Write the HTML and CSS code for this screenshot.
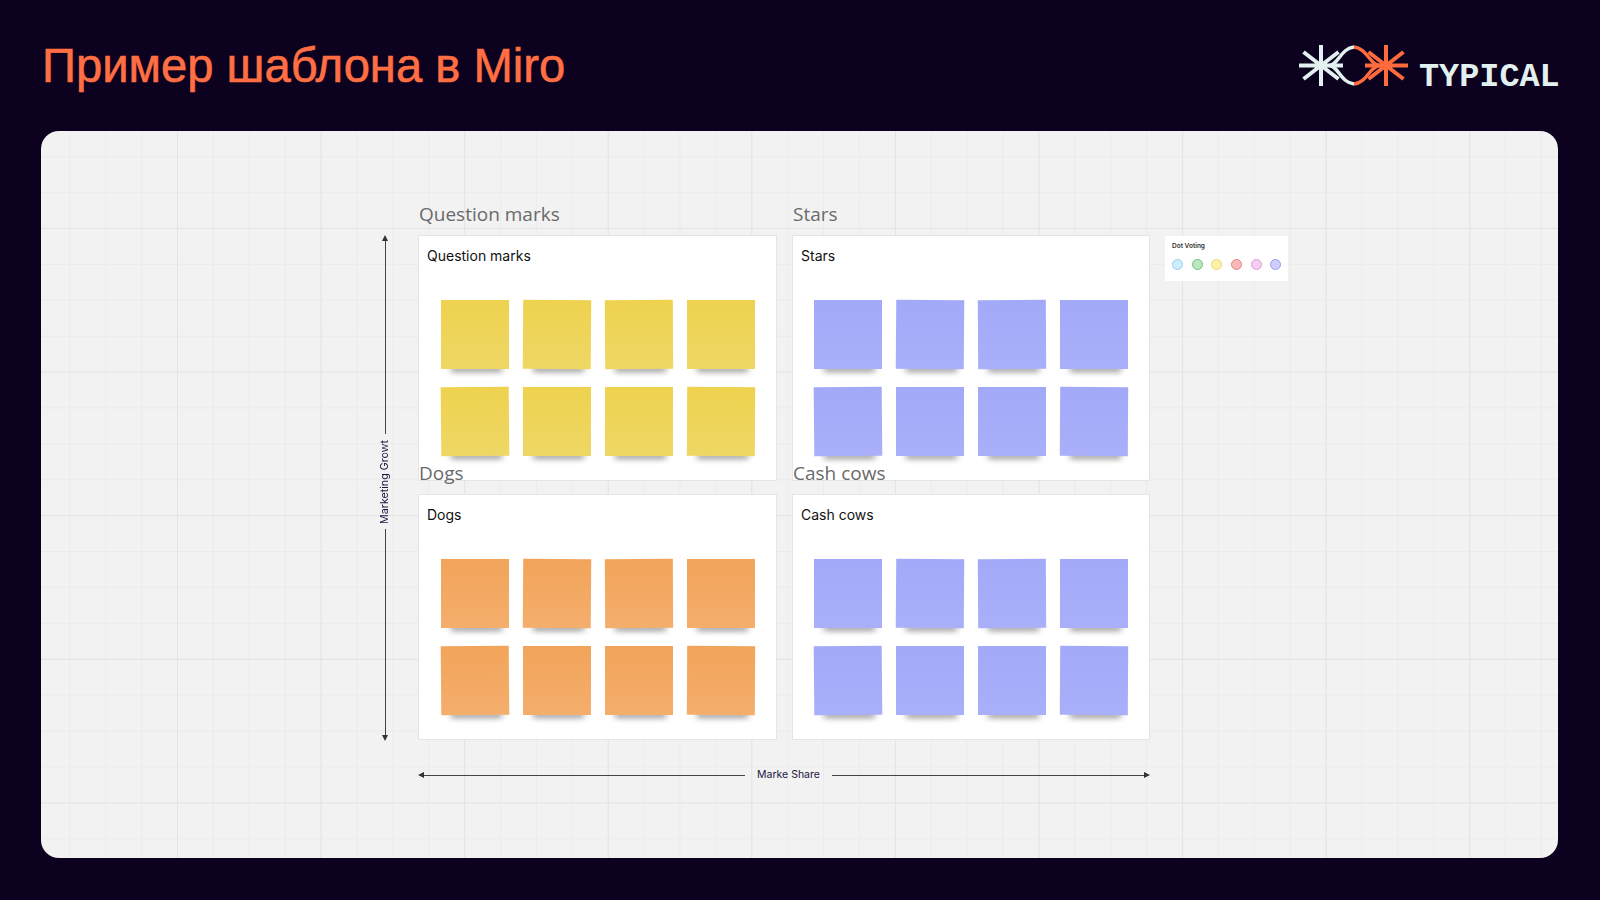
FILE: index.html
```html
<!DOCTYPE html>
<html lang="ru">
<head>
    <meta charset="UTF-8">
    <meta name="viewport" content="width=device-width, initial-scale=1.0">
    <title>Пример шаблона в Miro</title>
    <link rel="stylesheet" href="styles.css">
</head>
<body>

<header class="header">
    <h1 class="title">Пример шаблона в Miro</h1>
    <div class="logo">
        <svg class="logo-mark" width="110" height="44" viewBox="0 0 110 44" fill="none" stroke-width="3.4">
            <g stroke="#e2f1ef">
                <path d="M0 21.5H44M22 1V42M4.5 8L39.5 35M4.5 35L39.5 8" stroke-width="4"/>
                <path d="M30 21.5C39 21.5 42 4 55 3M30 21.5C39 21.5 42 39 55 40"/>
            </g>
            <g stroke="#ff6b3d">
                <path d="M66 21.5H109M87 1V42M69.5 8L104.5 35M69.5 35L104.5 8" stroke-width="4"/>
                <path d="M55 3C68 4 71 21.5 81 21.5M55 40C68 39 71 21.5 81 21.5"/>
            </g>
        </svg>
        <span class="logo-text">TYPICAL</span>
    </div>
</header>

<main class="board">
    <!-- Вертикальная ось -->
    <div class="axis-v">
        <span class="head head-up"></span>
        <span class="line-v line-top"></span>
        <span class="axis-label-v">Marketing Growt</span>
        <span class="line-v line-bottom"></span>
        <span class="head head-down"></span>
    </div>

    <div class="matrix">
        <section class="quad">
            <div class="quad-label">Question marks</div>
            <div class="card">
                <div class="card-title">Question marks</div>
                <div class="notes">
                    <div class="note yellow"></div><div class="note yellow"></div><div class="note yellow"></div><div class="note yellow"></div>
                    <div class="note yellow"></div><div class="note yellow"></div><div class="note yellow"></div><div class="note yellow"></div>
                </div>
            </div>
        </section>
        <section class="quad">
            <div class="quad-label">Stars</div>
            <div class="card">
                <div class="card-title">Stars</div>
                <div class="notes">
                    <div class="note violet"></div><div class="note violet"></div><div class="note violet"></div><div class="note violet"></div>
                    <div class="note violet"></div><div class="note violet"></div><div class="note violet"></div><div class="note violet"></div>
                </div>
            </div>
        </section>
        <section class="quad">
            <div class="quad-label">Dogs</div>
            <div class="card">
                <div class="card-title">Dogs</div>
                <div class="notes">
                    <div class="note orange"></div><div class="note orange"></div><div class="note orange"></div><div class="note orange"></div>
                    <div class="note orange"></div><div class="note orange"></div><div class="note orange"></div><div class="note orange"></div>
                </div>
            </div>
        </section>
        <section class="quad">
            <div class="quad-label">Cash cows</div>
            <div class="card">
                <div class="card-title">Cash cows</div>
                <div class="notes">
                    <div class="note violet"></div><div class="note violet"></div><div class="note violet"></div><div class="note violet"></div>
                    <div class="note violet"></div><div class="note violet"></div><div class="note violet"></div><div class="note violet"></div>
                </div>
            </div>
        </section>
    </div>

    <!-- Dot voting -->
    <aside class="voting">
        <div class="voting-title">Dot Voting</div>
        <div class="dots">
            <span class="dot dot-blue"></span>
            <span class="dot dot-green"></span>
            <span class="dot dot-yellow"></span>
            <span class="dot dot-red"></span>
            <span class="dot dot-pink"></span>
            <span class="dot dot-violet"></span>
        </div>
    </aside>

    <!-- Горизонтальная ось -->
    <div class="axis-h">
        <span class="head head-left"></span>
        <span class="line-h line-left"></span>
        <span class="axis-label-h">Marke Share</span>
        <span class="line-h line-right"></span>
        <span class="head head-right"></span>
    </div>
</main>

</body>
</html>
```

FILE: styles.css
```css
body {
    margin: 0;
    height: 900px;
    overflow: hidden;
    background-color: #0c011f;
    font-family: "Liberation Sans", Arial, sans-serif;
}

.header {
    display: flex;
    justify-content: space-between;
    align-items: flex-start;
    height: 131px;
    padding: 0 41px 0 42px;
}

.title {
    margin: 38px 0 0;
    font-family: "Liberation Sans", Arial, sans-serif;
    font-size: 47.2px;
    line-height: 56px;
    font-weight: 400;
    color: #ff6f43;
    -webkit-text-stroke: 0.6px #ff6f43;
}

.logo {
    display: flex;
    align-items: flex-start;
    margin-top: 44px;
}

.logo-mark {
    display: block;
}

.logo-text {
    margin: 15px 0 0 10px;
    width: 140px;
    font-family: "Liberation Mono", monospace;
    font-size: 33.5px;
    line-height: 36px;
    font-weight: 700;
    color: #e2f1ef;
}

/* Miro board */
.board {
    display: grid;
    grid-template-columns: 24px 732px 123px;
    grid-template-rows: 505px auto;
    column-gap: 21px;
    align-content: start;
    margin-left: 41px;
    width: 1517px;
    height: 727px;
    box-sizing: border-box;
    padding: 104px 0 0 332px;
    border-radius: 18px;
    background-color: #f2f2f2;
    background-image:
        linear-gradient(#e4e4e4 1px, transparent 1px),
        linear-gradient(90deg, #e4e4e4 1px, transparent 1px),
        linear-gradient(#ebebeb 1px, transparent 1px),
        linear-gradient(90deg, #ebebeb 1px, transparent 1px);
    background-size: 143.6px 143.6px, 143.6px 143.6px, 35.9px 35.9px, 35.9px 35.9px;
    background-position: 0 97px, 136px 0, 0 97px, 136px 0;
}

.matrix {
    display: grid;
    grid-template-columns: 359px 358px;
    grid-template-rows: 246px 246px;
    column-gap: 15px;
    row-gap: 13px;
}

.quad {
    display: flex;
    flex-direction: column;
}

.quad-label {
    height: 36px;
    margin-top: -36px;
    padding-left: 1px;
    font-family: "Open Sans", sans-serif;
    font-size: 19px;
    line-height: 30px;
    color: #6a6a6a;
    position: relative;
    z-index: 1;
}

.card {
    flex: 1;
    box-sizing: border-box;
    padding: 12px 0 0 8px;
    background-color: #fff;
    border: 1px solid #e5e5e5;
}

.card-title {
    height: 16px;
    font-family: Inter, sans-serif;
    font-size: 14px;
    line-height: 16px;
    color: #111;
}

.notes {
    display: grid;
    grid-template-columns: repeat(4, 68px);
    grid-template-rows: repeat(2, 69px);
    column-gap: 14px;
    row-gap: 18px;
    margin: 36px 0 0 14px;
}

.quad:nth-child(even) .notes {
    margin-left: 13px;
}

.note {
    position: relative;
}

.note::after {
    content: "";
    position: absolute;
    left: 10px;
    right: 7px;
    bottom: -2px;
    height: 4px;
    background-color: rgba(0, 0, 0, 0.6);
    filter: blur(3px);
    z-index: 0;
}

.note::before {
    content: "";
    position: absolute;
    inset: 0;
    z-index: 1;
}

.yellow::before {
    background: linear-gradient(#eed24f, #efd765);
}

.orange::before {
    background: linear-gradient(#f2a45a, #f4ae6c);
}

.violet::before {
    background: linear-gradient(#a2a9f8, #a9aff9);
}

/* leicht schiefe Zettel */
.note:nth-child(2)::before { transform: rotate(0.4deg); }
.note:nth-child(3)::before { transform: rotate(-0.3deg); }
.note:nth-child(5)::before { transform: rotate(-0.5deg); }
.note:nth-child(8)::before { transform: rotate(0.3deg); }

/* Dot voting */
.voting {
    align-self: start;
    box-sizing: border-box;
    width: 123px;
    height: 45px;
    margin: 1px 0 0 -6px;
    padding: 6px 0 0 7px;
    background-color: #fff;
}

.voting-title {
    font-family: Inter, sans-serif;
    font-size: 6.5px;
    line-height: 9px;
    font-weight: 600;
    color: #333;
}

.dots {
    display: flex;
    gap: 8.7px;
    margin-top: 8px;
}

.dot {
    box-sizing: border-box;
    width: 11px;
    height: 11px;
    border-radius: 50%;
    border: 1px solid;
}

.dot-blue { background-color: #cfeefb; border-color: #8fd0ee; }
.dot-green { background-color: #b9e8c0; border-color: #6fc281; }
.dot-yellow { background-color: #fdf2a8; border-color: #ecd86a; }
.dot-red { background-color: #f9b9b9; border-color: #e58787; }
.dot-pink { background-color: #f6cdf3; border-color: #dd9fdc; }
.dot-violet { background-color: #cfcdfb; border-color: #a09bee; }

/* Achsen */
.axis-v {
    grid-row: 1;
    grid-column: 1;
    display: flex;
    flex-direction: column;
    align-items: center;
    height: 506px;
}

.line-v {
    width: 1px;
    background-color: #444;
}

.line-top { flex: 192; }
.line-bottom { flex: 205; }

.axis-label-v {
    padding: 6px 0;
    writing-mode: vertical-rl;
    transform: rotate(180deg);
    font-family: Inter, sans-serif;
    font-size: 10.7px;
    line-height: 12px;
    color: #1d1640;
}

.axis-h {
    grid-row: 2;
    grid-column: 2;
    display: flex;
    align-items: center;
    margin-top: 28px;
    height: 14px;
}

.line-h {
    height: 1px;
    background-color: #444;
}

.line-left { flex: 321; }
.line-right { flex: 312; }

.axis-label-h {
    width: 87px;
    text-align: center;
    font-family: Inter, sans-serif;
    font-size: 10.5px;
    line-height: 14px;
    color: #1d1640;
}

.head {
    width: 0;
    height: 0;
    border-style: solid;
    border-color: transparent;
}

.head-up { border-width: 0 3px 6px; border-bottom-color: #333; }
.head-down { border-width: 6px 3px 0; border-top-color: #333; }
.head-left { border-width: 3px 6px 3px 0; border-right-color: #333; }
.head-right { border-width: 3px 0 3px 6px; border-left-color: #333; }
```
